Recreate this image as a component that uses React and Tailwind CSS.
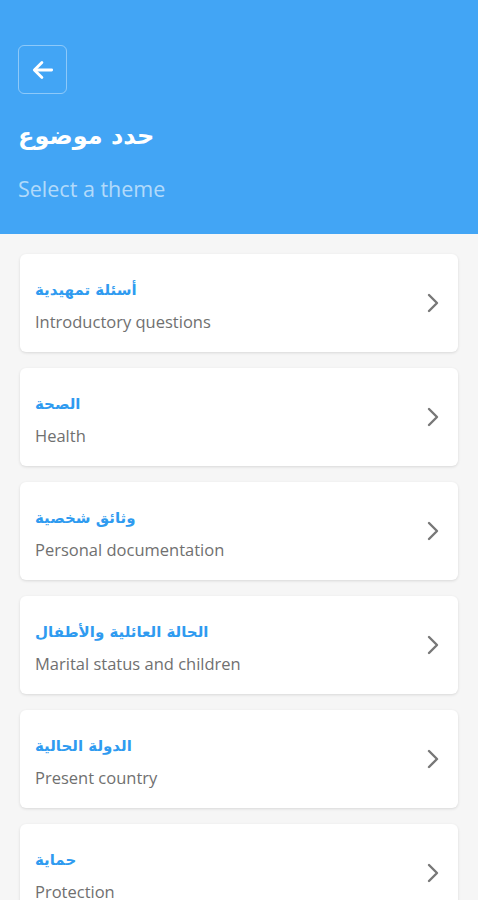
import React from "react";

const items = [
  ["أسئلة تمهيدية", "Introductory questions"],
  ["الصحة", "Health"],
  ["وثائق شخصية", "Personal documentation"],
  ["الحالة العائلية والأطفال", "Marital status and children"],
  ["الدولة الحالية", "Present country"],
  ["حماية", "Protection"],
];

export default function App() {
  return (
    <div className="w-[478px] h-[900px] overflow-hidden bg-[#f6f6f6] font-['Open_Sans','DejaVu_Sans',sans-serif]">
      <div className="bg-[#42a5f5] h-[234px] pt-[45px] px-[18px]">
        <div className="w-[49px] h-[49px] rounded-[6px] border border-white/40 flex items-center justify-center">
          <svg width="26" height="26" viewBox="0 0 24 24" fill="none" stroke="white" strokeWidth="2.6" strokeLinecap="round" strokeLinejoin="round">
            <path d="M20 12H5" />
            <path d="M11 5l-7 7 7 7" />
          </svg>
        </div>
        <div className="mt-[24px] text-white text-[24px] font-bold leading-[36px] font-['DejaVu_Sans',sans-serif]">حدد موضوع</div>
        <div className="mt-[20px] text-white/60 text-[21.5px] leading-[30px]">Select a theme</div>
      </div>
      <div className="px-[20px] pt-[20px] flex flex-col gap-[16px]">
        {items.map(([ar, en]) => (
          <div key={en} className="bg-white rounded-[6px] h-[98px] shadow-[0_1px_3px_rgba(0,0,0,0.12)] flex items-center pl-[15px] pr-[18px]">
            <div className="flex-1 pt-[4px]">
              <div className="text-[#2f9bf0] text-[15px] font-bold leading-[24px] font-['DejaVu_Sans',sans-serif]">{ar}</div>
              <div className="mt-[9px] text-[#707070] text-[16.5px] leading-[22px]">{en}</div>
            </div>
            <svg width="14" height="20" viewBox="0 0 14 20" fill="none" stroke="#777" strokeWidth="2.4" strokeLinecap="round" strokeLinejoin="round">
              <path d="M3 2l8 8-8 8" />
            </svg>
          </div>
        ))}
      </div>
    </div>
  );
}
